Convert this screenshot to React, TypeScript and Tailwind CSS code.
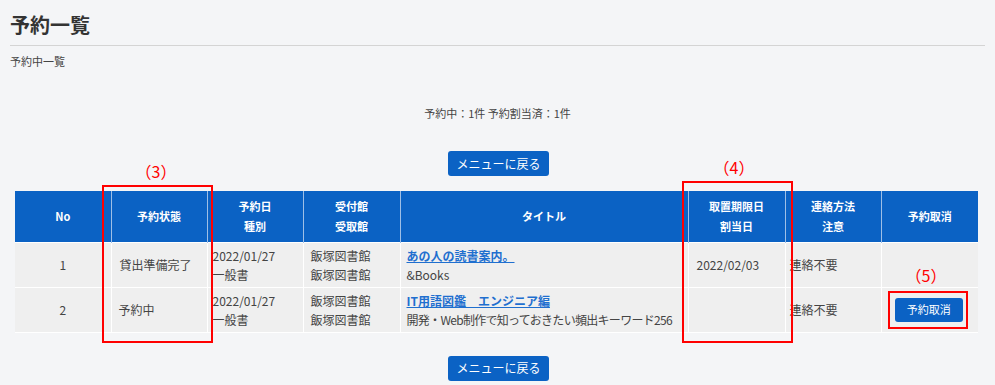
import React from "react";

const font = { fontFamily: '"Noto Sans CJK JP", "Noto Sans", sans-serif' };

function MenuButton() {
  return (
    <div className="flex justify-center">
      <button className="w-[101px] h-[25px] rounded-[3px] bg-[#0b62c4] text-white text-[12px] leading-none ml-[2px]">
        メニューに戻る
      </button>
    </div>
  );
}

const widths = [96, 96, 96, 97, 288, 97, 96, 97];

export default function App() {
  const th = "border-x border-[#9fbfe6] text-white text-[11px] font-bold leading-[20px] text-center align-middle";
  const td = "border border-white text-[12px] text-[#444] leading-[19px] align-middle whitespace-nowrap";
  return (
    <div className="relative w-[995px] h-[385px] bg-[#f4f5f7] overflow-hidden" style={font}>
      <div className="px-[10px] pt-[11px]">
        <h1 className="text-[20px] leading-[28px] font-bold text-[#333] border-b border-[#d4d4d4] pb-[6px]">予約一覧</h1>
        <div className="text-[11px] leading-[16px] text-[#444] pt-[7px]">予約中一覧</div>
      </div>
      <div className="text-center text-[11px] leading-[16px] text-[#444] mt-[36px]">予約中：1件 予約割当済：1件</div>
      <div className="mt-[30px]">
        <MenuButton />
      </div>
      <div className="pl-[15px] mt-[15px]">
        <table className="border-collapse table-fixed w-[963px]">
          <colgroup>
            {widths.map((w, i) => (
              <col key={i} style={{ width: w }} />
            ))}
          </colgroup>
          <thead>
            <tr className="h-[51px] bg-[#0b62c4]">
              <th className={th + " border-l-0"}>No</th>
              <th className={th}>予約状態</th>
              <th className={th}>予約日<br />種別</th>
              <th className={th}>受付館<br />受取館</th>
              <th className={th}>タイトル</th>
              <th className={th}>取置期限日<br />割当日</th>
              <th className={th}>連絡方法<br />注意</th>
              <th className={th + " border-r-0"}>予約取消</th>
            </tr>
          </thead>
          <tbody className="bg-[#efefef]">
            <tr className="h-[45px] border-b border-[#dcdcdc]">
              <td className={td + " text-center border-l-0"}>1</td>
              <td className={td + " pl-[8px]"}>貸出準備完了</td>
              <td className={td + " pl-[5px]"}>2022/01/27<br />一般書</td>
              <td className={td + " pl-[7px]"}>飯塚図書館<br />飯塚図書館</td>
              <td className={td + " pl-[6px]"}>
                <a className="text-[#1f6fcf] font-bold underline">あの人の読書案内。</a>
                <br />&amp;Books
              </td>
              <td className={td + " pl-[8px]"}>2022/02/03</td>
              <td className={td + " pl-[4px]"}>連絡不要</td>
              <td className={td + " border-r-0"}></td>
            </tr>
            <tr className="h-[45px] border-b border-[#dcdcdc]">
              <td className={td + " text-center border-l-0"}>2</td>
              <td className={td + " pl-[7px]"}>予約中</td>
              <td className={td + " pl-[5px]"}>2022/01/27<br />一般書</td>
              <td className={td + " pl-[7px]"}>飯塚図書館<br />飯塚図書館</td>
              <td className={td + " pl-[6px]"}>
                <a className="text-[#1f6fcf] font-bold underline">IT用語図鑑　エンジニア編</a>
                <br />
                <span className="tracking-[-0.7px]">開発・Web制作で知っておきたい頻出キーワード256</span>
              </td>
              <td className={td}></td>
              <td className={td + " pl-[4px]"}>連絡不要</td>
              <td className={td + " border-r-0"}>
                <div className="flex justify-center">
                  <button className="w-[68px] h-[24px] rounded-[3px] bg-[#0b62c4] text-white text-[11px] leading-none -ml-[2px]">
                    予約取消
                  </button>
                </div>
              </td>
            </tr>
          </tbody>
        </table>
      </div>
      <div className="mt-[23px]">
        <MenuButton />
      </div>

      {/* annotations */}
      <div className="absolute left-[102px] top-[185px] w-[111px] h-[158px] border-2 border-[#ff0000]" />
      <div className="absolute left-[132px] top-[160px] w-[48px] text-center text-[16px] leading-[22px] text-[#ff0000]">（3）</div>
      <div className="absolute left-[682px] top-[181px] w-[111px] h-[162px] border-2 border-[#ff0000]" />
      <div className="absolute left-[710px] top-[156px] w-[48px] text-center text-[16px] leading-[22px] text-[#ff0000]">（4）</div>
      <div className="absolute left-[888px] top-[291px] w-[80px] h-[38px] border-2 border-[#ff0000]" />
      <div className="absolute left-[902px] top-[264px] w-[48px] text-center text-[16px] leading-[22px] text-[#ff0000]">（5）</div>
    </div>
  );
}
